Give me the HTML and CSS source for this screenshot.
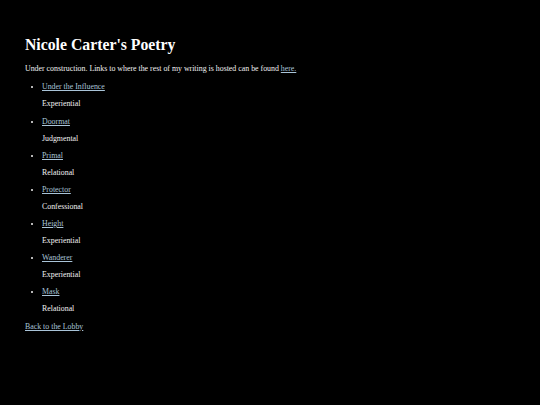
FILE: index.html
```html
<!DOCTYPE html>
<html>
<head>
<meta charset="utf-8">
<title>Nicole Carter's Poetry</title>
<link rel="stylesheet" href="styles.css">
</head>
<body>
<h1 class="title">Nicole Carter's Poetry</h1>
<p class="intro">Under construction. Links to where the rest of my writing is hosted can be found <a href="#">here.</a></p>
<ul class="poems">
  <li><a href="#">Under the Influence</a><p>Experiential</p></li>
  <li><a href="#">Doormat</a><p>Judgmental</p></li>
  <li><a href="#">Primal</a><p>Relational</p></li>
  <li><a href="#">Protector</a><p>Confessional</p></li>
  <li><a href="#">Height</a><p>Experiential</p></li>
  <li><a href="#">Wanderer</a><p>Experiential</p></li>
  <li><a href="#">Mask</a><p>Relational</p></li>
</ul>
<a class="back" href="#">Back to the Lobby</a>
</body>
</html>
```
FILE: styles.css
```css
html {
  background: #000;
}
body {
  margin: 25px;
  background: #000;
  color: #f2f2f2;
  font-family: "Liberation Serif", "Times New Roman", serif;
  font-size: 7.875px;
  line-height: 1.17;
}
.title {
  font-size: 15.75px;
  font-weight: bold;
  line-height: 1.15;
  margin: 0.67em 0;
  color: #fff;
}
.intro {
  margin: 1em 0;
}
.poems {
  margin: 9px 0 1em;
  padding-left: 17px;
}
.poems p {
  margin: 1em 0;
}
a {
  color: #a9c4d8;
}
```
